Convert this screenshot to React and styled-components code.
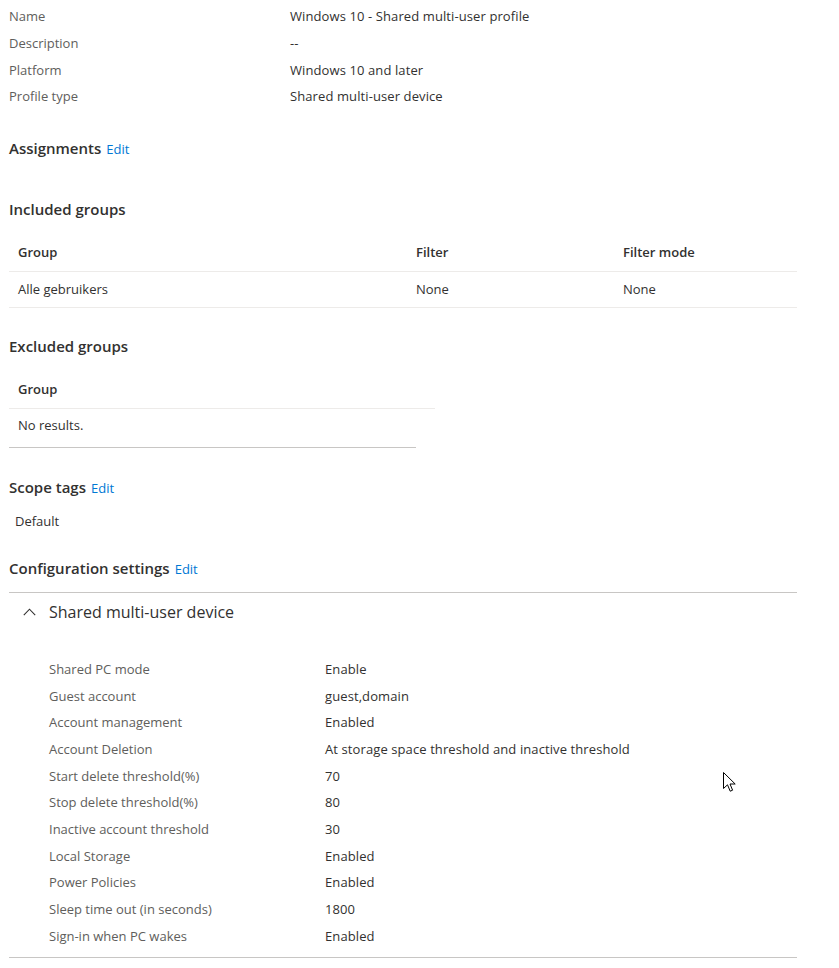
import React from "react";
import styled, { createGlobalStyle } from "styled-components";

const Global = createGlobalStyle`
  html, body { margin: 0; padding: 0; background: #ffffff; }
  body {
    font-family: "Open Sans", "Noto Sans", "Liberation Sans", sans-serif;
    color: #323130;
    -webkit-font-smoothing: antialiased;
  }
`;

const Page = styled.div`
  position: relative;
  width: 839px;
  min-height: 968px;
  box-sizing: border-box;
  padding: 3px 42px 0 9px;
  font-size: 13px;
`;

const Summary = styled.div`
  display: grid;
  grid-template-columns: 281px 1fr;
  grid-auto-rows: 26.67px;
  align-items: center;
`;

const Label = styled.div`
  color: #605e5c;
  white-space: nowrap;
`;

const Value = styled.div`
  color: #323130;
  white-space: nowrap;
  letter-spacing: 0.1px;
`;

const Heading = styled.div`
  display: flex;
  align-items: baseline;
  gap: 5px;
  height: 22px;
  line-height: 22px;
  margin-top: ${(p) => p.$mt}px;
  font-size: 15px;
  font-weight: 600;
  color: #323130;
`;

const EditLink = styled.a`
  font-size: 13px;
  font-weight: 400;
  color: #0078d4;
  text-decoration: none;
  cursor: pointer;
`;

const Table = styled.div`
  margin-top: 14px;
  width: ${(p) => p.$w}px;
  border-bottom: ${(p) => (p.$bottom ? "1px solid #c8c6c4" : "none")};
`;

const TRow = styled.div`
  display: grid;
  grid-template-columns: ${(p) => p.$cols};
  align-items: center;
  height: ${(p) => p.$h}px;
  width: ${(p) => (p.$w ? `${p.$w}px` : "auto")};
  border-bottom: ${(p) => (p.$line ? "1px solid #edebe9" : "none")};
  box-sizing: border-box;
  font-weight: ${(p) => (p.$head ? 600 : 400)};
  padding-bottom: ${(p) => p.$pb || 0}px;
`;

const Cell = styled.div`
  padding-left: 9px;
  white-space: nowrap;
  color: #323130;
`;

const Plain = styled.div`
  margin-top: 14px;
  padding-left: 6px;
  line-height: 18px;
  color: #323130;
`;

const Accordion = styled.div`
  margin-top: 13px;
  width: 788px;
  border-top: 1px solid #c8c6c4;
  border-bottom: 1px solid #c8c6c4;
  padding-bottom: 8px;
`;

const AccHeader = styled.div`
  display: flex;
  align-items: center;
  height: 38px;
  padding-left: 14px;
  gap: 13px;
  font-size: 16px;
  color: #323130;
`;

const Settings = styled.div`
  margin-top: 25px;
  padding-left: 40px;
  display: grid;
  grid-template-columns: 276px 1fr;
  grid-auto-rows: 26.67px;
  align-items: center;
`;

const Cursor = styled.svg`
  position: absolute;
  left: 723px;
  top: 772px;
`;

const summary = [
  ["Name", "Windows 10 - Shared multi-user profile"],
  ["Description", "--"],
  ["Platform", "Windows 10 and later"],
  ["Profile type", "Shared multi-user device"],
];

const settings = [
  ["Shared PC mode", "Enable"],
  ["Guest account", "guest,domain"],
  ["Account management", "Enabled"],
  ["Account Deletion", "At storage space threshold and inactive threshold"],
  ["Start delete threshold(%)", "70"],
  ["Stop delete threshold(%)", "80"],
  ["Inactive account threshold", "30"],
  ["Local Storage", "Enabled"],
  ["Power Policies", "Enabled"],
  ["Sleep time out (in seconds)", "1800"],
  ["Sign-in when PC wakes", "Enabled"],
];

const Chevron = () => (
  <svg width="13" height="8" viewBox="0 0 13 8">
    <polyline points="0.8,7.2 6.5,1.2 12.2,7.2" fill="none" stroke="#323130" strokeWidth="1.1" />
  </svg>
);

export default function App() {
  const cols = "398px 207px 1fr";
  return (
    <Page>
      <Global />
      <Summary>
        {summary.map(([l, v]) => (
          <React.Fragment key={l}>
            <Label>{l}</Label>
            <Value>{v}</Value>
          </React.Fragment>
        ))}
      </Summary>

      <Heading $mt={27}>
        Assignments <EditLink>Edit</EditLink>
      </Heading>

      <Heading $mt={39}>Included groups</Heading>
      <Table $w={788}>
        <TRow $cols={cols} $h={38} $line $head>
          <Cell>Group</Cell>
          <Cell>Filter</Cell>
          <Cell>Filter mode</Cell>
        </TRow>
        <TRow $cols={cols} $h={36} $line>
          <Cell>Alle gebruikers</Cell>
          <Cell>None</Cell>
          <Cell>None</Cell>
        </TRow>
      </Table>

      <Heading $mt={27}>Excluded groups</Heading>
      <Table $w={407} $bottom>
        <TRow $cols="1fr" $h={38} $w={426} $line $head>
          <Cell>Group</Cell>
        </TRow>
        <TRow $cols="1fr" $h={38} $pb={5}>
          <Cell>No results.</Cell>
        </TRow>
      </Table>

      <Heading $mt={28}>
        Scope tags <EditLink>Edit</EditLink>
      </Heading>
      <Plain>Default</Plain>

      <Heading $mt={27}>
        Configuration settings <EditLink>Edit</EditLink>
      </Heading>
      <Accordion>
        <AccHeader>
          <Chevron />
          Shared multi-user device
        </AccHeader>
        <Settings>
          {settings.map(([l, v]) => (
            <React.Fragment key={l}>
              <Label>{l}</Label>
              <Value>{v}</Value>
            </React.Fragment>
          ))}
        </Settings>
      </Accordion>

      <Cursor width="13" height="21" viewBox="0 0 13 21">
        <path d="M0.5,0.5 L0.5,16.5 L4.5,12.8 L7.2,19.2 L9.6,18.2 L7,12 L12.2,12 Z" fill="#ffffff" stroke="#000000" strokeWidth="1" strokeLinejoin="miter" />
      </Cursor>
    </Page>
  );
}
